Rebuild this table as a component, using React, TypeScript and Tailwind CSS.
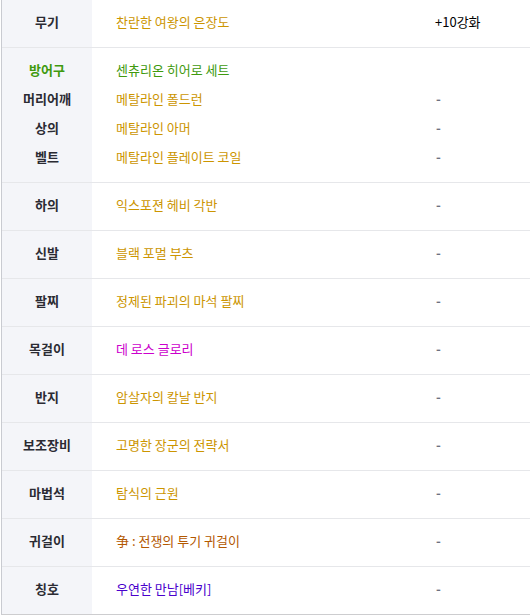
const GOLD = 'text-[#cc9500]';

type Line = {
  label: string;
  name: string;
  color: string;
  labelColor?: string;
  extra?: string;
};

const rows: Line[][] = [
  [{ label: '무기', name: '찬란한 여왕의 은장도', color: GOLD, extra: '+10강화' }],
  [
    { label: '방어구', name: '센츄리온 히어로 세트', color: 'text-[#3f9a0e]', labelColor: 'text-[#3f9a0e]', extra: '' },
    { label: '머리어깨', name: '메탈라인 폴드런', color: GOLD },
    { label: '상의', name: '메탈라인 아머', color: GOLD },
    { label: '벨트', name: '메탈라인 플레이트 코일', color: GOLD },
  ],
  [{ label: '하의', name: '익스포젼 헤비 각반', color: GOLD }],
  [{ label: '신발', name: '블랙 포멀 부츠', color: GOLD }],
  [{ label: '팔찌', name: '정제된 파괴의 마석 팔찌', color: GOLD }],
  [{ label: '목걸이', name: '데 로스 글로리', color: 'text-[#cc00cc]' }],
  [{ label: '반지', name: '암살자의 칼날 반지', color: GOLD }],
  [{ label: '보조장비', name: '고명한 장군의 전략서', color: GOLD }],
  [{ label: '마법석', name: '탐식의 근원', color: GOLD }],
  [{ label: '귀걸이', name: '争 : 전쟁의 투기 귀걸이', color: 'text-[#b35800]' }],
  [{ label: '칭호', name: '우연한 만남[베키]', color: 'text-[#4a00cc]' }],
];

export default function App() {
  return (
    <div className="w-[530px] h-[616px] bg-white pl-px font-['Noto_Sans_CJK_KR','Noto_Sans',sans-serif] text-[13px]">
      {/* equipment table */}
      <div className="border-l border-b border-l-[#c9cbd1] border-b-[#cdcdcf]">
        {rows.map((group, i) => {
          const multi = group.length > 1;
          const last = i === rows.length - 1;
          return (
            <div
              key={i}
              className={`grid grid-cols-[90px_343px_1fr] ${last ? 'h-[47px]' : 'border-b border-[#e6e7ea]'} ${
                last ? '' : multi ? 'h-[135px]' : 'h-[48px]'
              }`}
            >
              <div className="bg-[#f4f5f9] flex flex-col justify-center items-center pb-[5px] font-bold text-[#2b2b33]">
                {group.map((l) => (
                  <div key={l.label} className={`leading-[29px] ${l.labelColor ?? ''}`}>
                    {l.label}
                  </div>
                ))}
              </div>
              <div className="flex flex-col justify-center pb-[5px] pl-[24px]">
                {group.map((l) => (
                  <div key={l.name} className={`leading-[29px] ${l.color}`}>
                    {l.name}
                  </div>
                ))}
              </div>
              <div className="flex flex-col justify-center pb-[5px]">
                {group.map((l) => (
                  <div
                    key={l.label}
                    className={`h-[29px] leading-[29px] ${l.extra ? 'text-black' : 'text-[#6e7180] font-bold pl-[1px]'}`}
                  >
                    {l.extra === undefined ? '-' : l.extra}
                  </div>
                ))}
              </div>
            </div>
          );
        })}
      </div>
    </div>
  );
}
